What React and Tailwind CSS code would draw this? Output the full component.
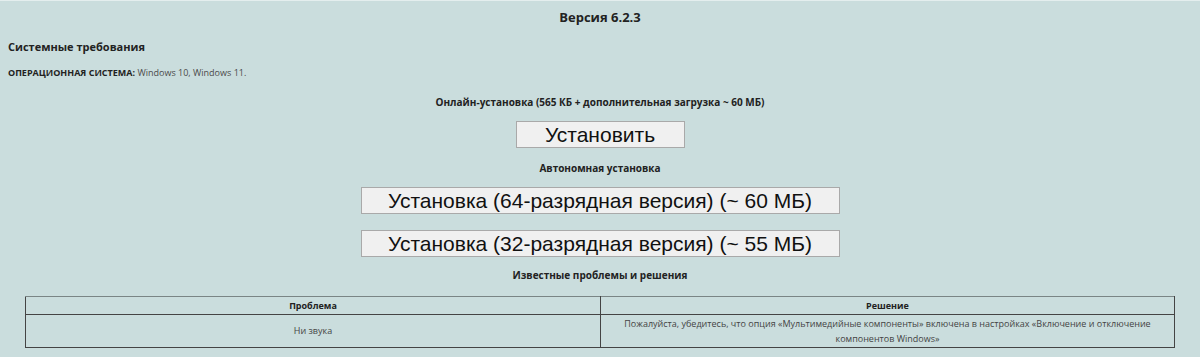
import React from 'react';

const sans = { fontFamily: '"Open Sans", "Noto Sans", sans-serif' };

function BigButton({ children, className }) {
  return (
    <button
      className={`block mx-auto h-[27px] bg-[#f0f0f0] border border-[#a9a9a9] text-[#111] text-[21px] leading-[25px] ${className}`}
      style={{ fontFamily: '"Liberation Sans", Arial, sans-serif' }}
    >
      {children}
    </button>
  );
}

export default function App() {
  return (
    <div className="w-[1200px] h-[357px] bg-[#cadddd] border-t border-[#e4eeee] text-[#222] overflow-hidden" style={sans}>
      <h1 className="mt-[7px] text-center font-bold text-[13px] leading-[18px]">Версия 6.2.3</h1>

      <h2 className="mt-[14px] ml-[8px] font-bold text-[11px] leading-[14px]">Системные требования</h2>
      <p className="mt-[13px] ml-[8px] text-[9px] leading-[12px]">
        <span className="font-bold">ОПЕРАЦИОННАЯ СИСТЕМА:</span>{' '}
        <span className="text-[#4a4a4a]">Windows 10, Windows 11.</span>
      </p>

      <p className="mt-[16px] text-center font-bold text-[10px] leading-[14px]">
        Онлайн-установка (565 КБ + дополнительная загрузка ~ 60 МБ)
      </p>
      <BigButton className="mt-[12px] w-[169px]">Установить</BigButton>

      <p className="mt-[13px] text-center font-bold text-[10px] leading-[14px]">Автономная установка</p>
      <BigButton className="mt-[12px] w-[479px]">Установка (64-разрядная версия) (~ 60 МБ)</BigButton>
      <BigButton className="mt-[16px] w-[479px]">Установка (32-разрядная версия) (~ 55 МБ)</BigButton>

      <p className="mt-[11px] text-center font-bold text-[10px] leading-[14px]">Известные проблемы и решения</p>

      <table className="mt-[14px] mx-auto w-[1150px] border-collapse text-[9px]">
        <thead>
          <tr className="h-[18px]">
            <th className="w-[575px] border border-[#444] border-t-[#7a8585] font-bold">Проблема</th>
            <th className="border border-[#444] border-t-[#7a8585] font-bold">Решение</th>
          </tr>
        </thead>
        <tbody>
          <tr className="h-[33px]">
            <td className="border border-[#444] text-center text-[#444]">Ни звука</td>
            <td className="border border-[#444] text-center text-[#444] leading-[15px] px-[20px]">
              Пожалуйста, убедитесь, что опция «Мультимедийные компоненты» включена в настройках «Включение и отключение компонентов Windows»
            </td>
          </tr>
        </tbody>
      </table>
    </div>
  );
}
